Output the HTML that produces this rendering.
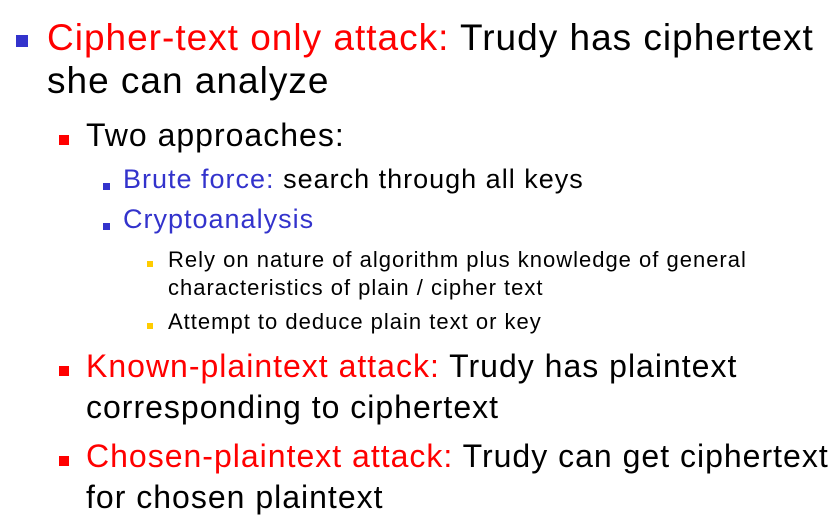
<!DOCTYPE html>
<html><head><meta charset="utf-8"><style>
body{margin:0;width:840px;height:524px;background:#fff;position:relative;overflow:hidden;font-family:"Liberation Sans","DejaVu Sans",sans-serif}
.t{position:absolute;white-space:nowrap;line-height:1;color:#000;letter-spacing:1px}
.b{position:absolute}
.r{color:#ff0000}.u{color:#3333cc}
</style></head><body>
<div class="b" style="left:16px;top:35px;width:12px;height:12px;background:#3333cc"></div>
<div class="t" style="left:47px;top:19px;font-size:37px"><span class="r">Cipher-text only attack:</span> Trudy has ciphertext</div>
<div class="t" style="left:47px;top:62px;font-size:37px">she can analyze</div>

<div class="b" style="left:59px;top:135px;width:10px;height:10px;background:#ff0000"></div>
<div class="t" style="left:86px;top:119px;font-size:32px">Two approaches:</div>

<div class="b" style="left:103px;top:183px;width:7px;height:7px;background:#3333cc"></div>
<div class="t" style="left:123px;top:166px;font-size:27px"><span class="u">Brute force:</span> search through all keys</div>
<div class="b" style="left:103px;top:223px;width:7px;height:7px;background:#3333cc"></div>
<div class="t" style="left:123px;top:206px;font-size:27px"><span class="u">Cryptoanalysis</span></div>

<div class="b" style="left:147px;top:261px;width:6px;height:6px;background:#ffcc00"></div>
<div class="t" style="left:168px;top:249px;font-size:22px">Rely on nature of algorithm plus knowledge of general</div>
<div class="t" style="left:168px;top:277px;font-size:22px">characteristics of plain / cipher text</div>
<div class="b" style="left:147px;top:323px;width:6px;height:6px;background:#ffcc00"></div>
<div class="t" style="left:168px;top:311px;font-size:22px">Attempt to deduce plain text or key</div>

<div class="b" style="left:59px;top:366px;width:10px;height:10px;background:#ff0000"></div>
<div class="t" style="left:86px;top:350px;font-size:32px"><span class="r">Known-plaintext attack:</span> Trudy has plaintext</div>
<div class="t" style="left:86px;top:391px;font-size:32px">corresponding to ciphertext</div>
<div class="b" style="left:59px;top:456px;width:10px;height:10px;background:#ff0000"></div>
<div class="t" style="left:86px;top:440px;font-size:32px"><span class="r">Chosen-plaintext attack:</span> Trudy can get ciphertext</div>
<div class="t" style="left:86px;top:481px;font-size:32px">for chosen plaintext</div>
</body></html>
